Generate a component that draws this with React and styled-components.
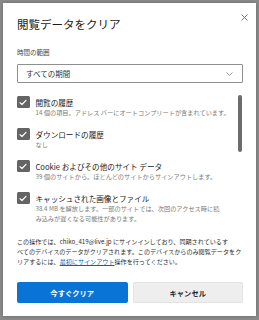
import React from "react";
import styled, { createGlobalStyle } from "styled-components";

const Global = createGlobalStyle`
  html, body { margin: 0; padding: 0; }
  body {
    background: #8b8b8b;
    width: 259px;
    height: 320px;
    overflow: hidden;
    font-family: "Noto Sans CJK JP", "Noto Sans", sans-serif;
  }
  * { box-sizing: border-box; }
`;

const Dialog = styled.div`
  position: relative;
  margin: 3px 0 0 3px;
  width: 253px;
  height: 313px;
  background: #ffffff;
  padding: 13px 13px 13px 14px;
  display: flex;
  flex-direction: column;
  box-shadow: 0 0 4px rgba(0, 0, 0, 0.25);
`;

const Title = styled.h1`
  margin: 0;
  font-size: 11.5px;
  line-height: 16px;
  font-weight: 400;
  color: #1c1c1c;
`;

const CloseButton = styled.button`
  position: absolute;
  top: 8px;
  right: 6px;
  width: 12px;
  height: 12px;
  padding: 0;
  border: none;
  background: transparent;
  display: flex;
  align-items: center;
  justify-content: center;
`;

const Label = styled.div`
  margin-top: 15px;
  font-size: 6.5px;
  line-height: 10px;
  color: #444;
`;

const Select = styled.div`
  margin-top: 7px;
  height: 19px;
  border: 1px solid #8f8f8f;
  border-radius: 1px;
  display: flex;
  align-items: center;
  justify-content: space-between;
  padding: 0 9px 0 8px;
  font-size: 7.5px;
  color: #333;
`;

const ScrollArea = styled.div`
  margin-top: 9px;
  height: 138px;
  display: flex;
  overflow: hidden;
`;

const List = styled.div`
  flex: 1;
  min-width: 0;
  padding-top: 5px;
  display: flex;
  flex-direction: column;
  gap: 11px;
`;

const Track = styled.div`
  flex: none;
  width: 5px;
  margin-left: 1px;
  padding-top: 3px;
`;

const Thumb = styled.div`
  width: 4px;
  height: 57px;
  border-radius: 2px;
  background: #6c6c6c;
`;

const Row = styled.div`
  display: flex;
  align-items: flex-start;
  gap: 6px;
`;

const Box = styled.div`
  flex: none;
  width: 12.5px;
  height: 12px;
  border-radius: 1.5px;
  background: #646464;
  display: flex;
  align-items: center;
  justify-content: center;
  margin-top: -1px;
`;

const Texts = styled.div`
  flex: 1;
  min-width: 0;
`;

const RowTitle = styled.div`
  font-size: 7.6px;
  line-height: 11px;
  color: #222;
  white-space: nowrap;
`;

const RowDesc = styled.div`
  font-size: 6.2px;
  line-height: 10px;
  color: #7a7a7a;
  white-space: pre;
`;

const Info = styled.p`
  margin: 7px 0 0;
  font-size: 6.1px;
  line-height: 10px;
  color: #2a2a2a;
  white-space: nowrap;
`;

const Link = styled.a`
  color: #0067b8;
  text-decoration: underline;
  text-underline-offset: 1px;
`;

const Buttons = styled.div`
  margin-top: 15px;
  display: grid;
  grid-template-columns: 1fr 1fr;
  gap: 5px;
`;

const Button = styled.button`
  height: 21px;
  border: none;
  border-radius: 2px;
  font-family: inherit;
  font-size: 7.3px;
  font-weight: 700;
  background: ${(p) => (p.$primary ? "#0a74d6" : "#eeeeee")};
  color: ${(p) => (p.$primary ? "#ffffff" : "#262626")};
  box-shadow: ${(p) => (p.$primary ? "none" : "inset 0 0 0 1px #e3e3e3")};
`;

const Check = () => (
  <svg width="8" height="7" viewBox="0 0 8 7">
    <path d="M1 3.6 L3 5.5 L7 1.3" fill="none" stroke="#fff" strokeWidth="1.2" strokeLinecap="round" strokeLinejoin="round" />
  </svg>
);

const items = [
  { title: "閲覧の履歴", desc: "14 個の項目。アドレス バーにオートコンプリートが含まれています。" },
  { title: "ダウンロードの履歴", desc: "なし" },
  { title: "Cookie およびその他のサイト データ", desc: "39 個のサイトから。ほとんどのサイトからサインアウトします。" },
  { title: "キャッシュされた画像とファイル", desc: "38.4 MB を解放します。一部のサイトでは、次回のアクセス時に読\nみ込みが遅くなる可能性があります。" },
];

export default function App() {
  return (
    <>
      <Global />
      <Dialog>
        <CloseButton aria-label="close">
          <svg width="7" height="7" viewBox="0 0 7 7">
            <path d="M0.5 0.5 L6.5 6.5 M6.5 0.5 L0.5 6.5" stroke="#666" strokeWidth="0.9" />
          </svg>
        </CloseButton>
        <Title>閲覧データをクリア</Title>
        <Label>時間の範囲</Label>
        <Select>
          <span>すべての期間</span>
          <svg width="7" height="4" viewBox="0 0 7 4">
            <path d="M0.5 0.5 L3.5 3.3 L6.5 0.5" fill="none" stroke="#777" strokeWidth="0.8" />
          </svg>
        </Select>
        <ScrollArea>
          <List>
            {items.map((it) => (
              <Row key={it.title}>
                <Box>
                  <Check />
                </Box>
                <Texts>
                  <RowTitle>{it.title}</RowTitle>
                  <RowDesc>{it.desc}</RowDesc>
                </Texts>
              </Row>
            ))}
          </List>
          <Track>
            <Thumb />
          </Track>
        </ScrollArea>
        <Info>
          この操作では、chiko_419@live.jp にサインインしており、同期されているす
          <br />
          べてのデバイスのデータがクリアされます。このデバイスからのみ閲覧データをク
          <br />
          リアするには、<Link>最初にサインアウト</Link>操作を行ってください。
        </Info>
        <Buttons>
          <Button $primary>今すぐクリア</Button>
          <Button>キャンセル</Button>
        </Buttons>
      </Dialog>
    </>
  );
}
